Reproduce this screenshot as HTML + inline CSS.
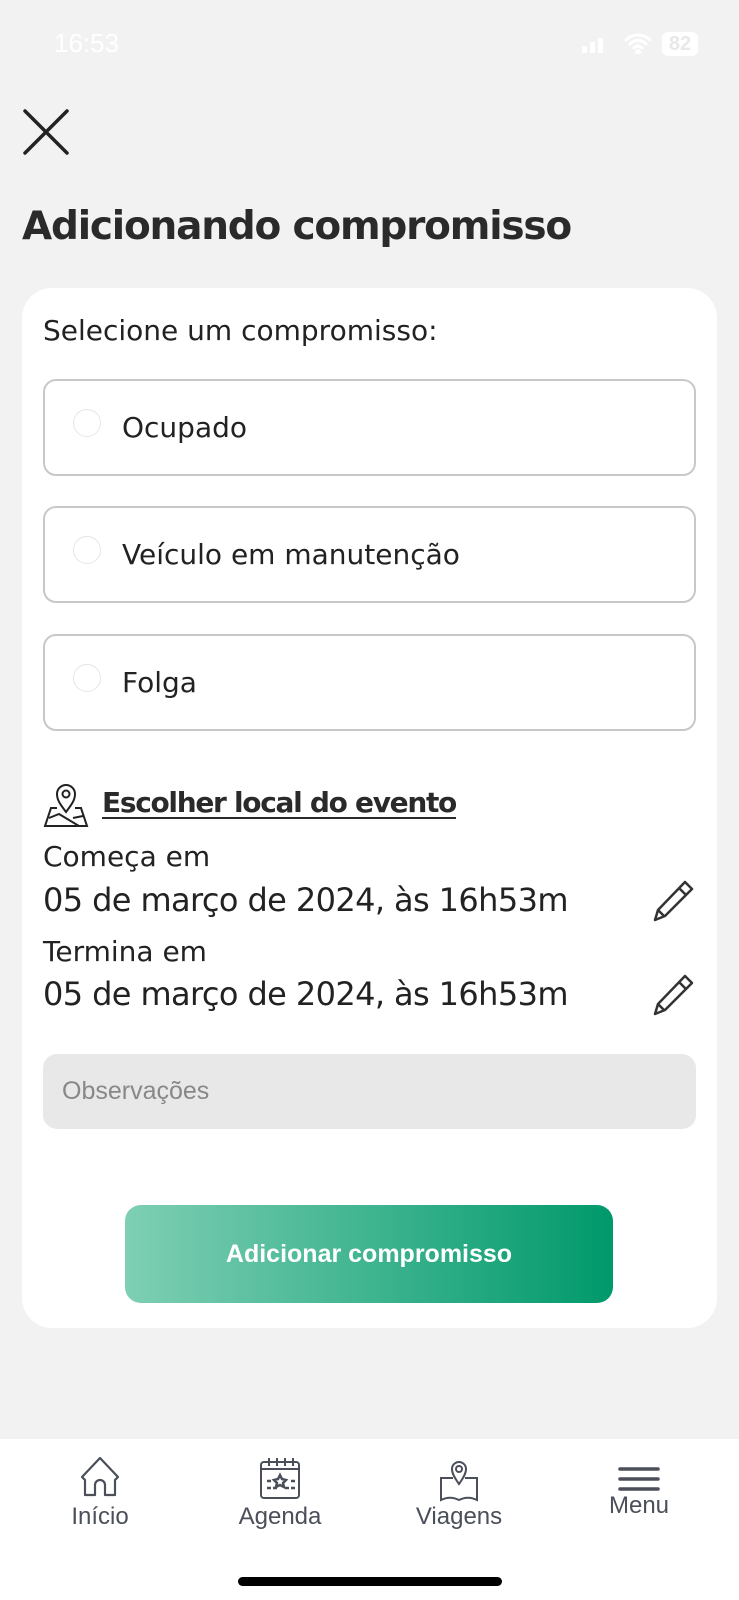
<!DOCTYPE html>
<html><head><meta charset="utf-8"><style>
*{margin:0;padding:0;box-sizing:border-box}
body{width:739px;height:1600px;background:#f2f2f2;position:relative;overflow:hidden;font-family:"DejaVu Sans","Liberation Sans",sans-serif;color:#222}
.a{position:absolute}
.opt{position:absolute;left:43px;width:653px;height:97px;border:2px solid #c8c8c8;border-radius:13px;background:#fff}
.opt .r{position:absolute;left:28px;top:28px;width:28px;height:28px;border:1.5px solid #e6e6e6;border-radius:50%}
.opt span{position:absolute;left:77px;top:0;line-height:93px;font-size:28px;color:#222}
.nl{position:absolute;font-family:"Liberation Sans",sans-serif;font-size:24px;color:#4a4f5a;transform:translateX(-50%);white-space:nowrap}
</style></head><body>
<div class="a" style="left:54px;top:28px;font-family:'Liberation Sans';font-size:26px;color:#fff">16:53</div>
<div class="a" style="left:582px;top:38px;display:flex;gap:3px;align-items:flex-end">
<div style="width:5px;height:7px;background:#fff;border-radius:1px"></div><div style="width:5px;height:11px;background:#fff;border-radius:1px"></div><div style="width:5px;height:15px;background:#fff;border-radius:1px"></div></div>
<svg class="a" style="left:624px;top:32px" width="28" height="22" viewBox="0 0 28 22" fill="none" stroke="#fff" stroke-width="3" stroke-linecap="round"><path d="M2 8a17 17 0 0124 0M6 12a11 11 0 0116 0M10 16a5 5 0 018 0"/><circle cx="14" cy="20" r="1.5" fill="#fff"/></svg>
<div class="a" style="left:662px;top:32px;width:36px;height:24px;background:#fff;border-radius:6px;color:#e8e8e8;font-family:'Liberation Sans';font-size:20px;text-align:center;line-height:24px;font-weight:bold">82</div>
<svg class="a" style="left:22px;top:108px" width="48" height="48" viewBox="0 0 48 48"><path d="M3 3L45 45M45 3L3 45" stroke="#222" stroke-width="3.5" stroke-linecap="round"/></svg>
<div class="a" style="left:22px;top:204px;font-size:39px;font-weight:bold;color:#2a2a2a;letter-spacing:-1.2px">Adicionando compromisso</div>
<div class="a" style="left:22px;top:288px;width:695px;height:1040px;background:#fff;border-radius:30px"></div>
<div class="a" style="left:43px;top:314px;font-size:28px;color:#222">Selecione um compromisso:</div>
<div class="opt" style="top:379px"><div class="r"></div><span>Ocupado</span></div>
<div class="opt" style="top:506px"><div class="r"></div><span>Veículo em manutenção</span></div>
<div class="opt" style="top:634px"><div class="r"></div><span>Folga</span></div>
<svg class="a" style="left:43px;top:782px" width="46" height="46" viewBox="0 0 46 46" fill="none" stroke="#222" stroke-width="2"><path d="M23 30C17 22 14 18 14 12a9 9 0 0118 0c0 6-3 10-9 18z"/><circle cx="23" cy="12" r="3.5"/><path d="M14 26H8L2 44H44L38 26H32M6 36l10-4 20 12M30 36l10-2"/></svg>
<div class="a" style="left:102px;top:786px;font-size:28px;font-weight:bold;letter-spacing:-1.3px;text-decoration:underline;text-underline-offset:5px;color:#2a2a2a">Escolher local do evento</div>
<div class="a" style="left:43px;top:840px;font-size:28px">Começa em</div>
<div class="a" style="left:43px;top:881px;font-size:32px;letter-spacing:-0.6px">05 de março de 2024, às 16h53m</div>
<div class="a" style="left:43px;top:935px;font-size:28px">Termina em</div>
<div class="a" style="left:43px;top:975px;font-size:32px;letter-spacing:-0.6px">05 de março de 2024, às 16h53m</div>
<svg class="a" style="left:650px;top:878px" width="46" height="46" viewBox="0 0 46 46" fill="none" stroke="#333" stroke-width="2.5" stroke-linejoin="round"><path d="M35 4l7 7L15 38 5 42l3-10z M29 10l7 7 M8 32l6 6"/></svg>
<svg class="a" style="left:650px;top:972px" width="46" height="46" viewBox="0 0 46 46" fill="none" stroke="#333" stroke-width="2.5" stroke-linejoin="round"><path d="M35 4l7 7L15 38 5 42l3-10z M29 10l7 7 M8 32l6 6"/></svg>
<div class="a" style="left:43px;top:1054px;width:653px;height:75px;background:#e8e8e8;border-radius:14px"></div>
<div class="a" style="left:62px;top:1077px;font-family:'Liberation Sans';font-size:25px;color:#888">Observações</div>
<div class="a" style="left:125px;top:1205px;width:488px;height:98px;border-radius:16px;background:linear-gradient(90deg,#7fcfb4,#00996b);color:#fff;font-family:'Liberation Sans';font-weight:bold;font-size:25px;text-align:center;line-height:98px">Adicionar compromisso</div>
<div class="a" style="left:0;top:1439px;width:739px;height:161px;background:#fff"></div>
<svg class="a" style="left:78px;top:1455px" width="44" height="44" viewBox="0 0 44 44" fill="none" stroke="#4a4f5a" stroke-width="2.2" stroke-linejoin="round"><path d="M22 3L4 22l3 3v15h10V30a5 5 0 0110 0v10h10V25l3-3z"/></svg>
<svg class="a" style="left:259px;top:1456px" width="42" height="44" viewBox="0 0 42 44" fill="none" stroke="#4a4f5a" stroke-width="2"><rect x="2" y="6" width="38" height="36" rx="3"/><path d="M2 13h38M10 2v8M18 2v8M26 2v8M34 2v8"/><path d="M8 25h4M8 32h4M14 32h4M26 32h4M32 32h4M32 25h4M21 19l2 4 4 1-3 3 1 4-4-2-4 2 1-4-3-3 4-1z" stroke-width="2.5"/></svg>
<svg class="a" style="left:438px;top:1456px" width="42" height="46" viewBox="0 0 42 46" fill="none" stroke="#4a4f5a" stroke-width="2"><path d="M21 28c-5-7-7-11-7-15a7 7 0 0114 0c0 4-2 8-7 15z"/><circle cx="21" cy="13" r="3"/><path d="M15 22H3v22c6-3 12-3 18 0 6-3 12-3 18 0V22H27"/></svg>
<svg class="a" style="left:617px;top:1466px" width="44" height="28" viewBox="0 0 44 28" stroke="#4a4f5a" stroke-width="3.5" stroke-linecap="round"><path d="M3 3h38M3 13h38M3 23h38"/></svg>
<div class="nl" style="left:100px;top:1503px">Início</div>
<div class="nl" style="left:280px;top:1503px">Agenda</div>
<div class="nl" style="left:459px;top:1503px">Viagens</div>
<div class="nl" style="left:639px;top:1492px">Menu</div>
<div class="a" style="left:238px;top:1577px;width:264px;height:9px;border-radius:5px;background:#000"></div>
</body></html>
